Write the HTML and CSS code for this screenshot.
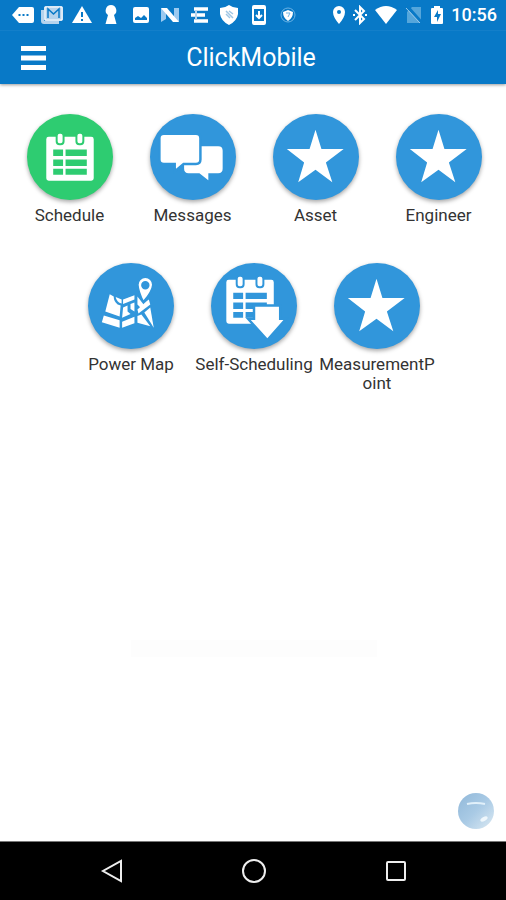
FILE: index.html
```html
<!DOCTYPE html>
<html lang="en">
<head>
<meta charset="utf-8">
<meta name="viewport" content="width=device-width, initial-scale=1">
<title>ClickMobile</title>
<link rel="stylesheet" href="styles.css">
</head>
<body>
<svg class="defs" aria-hidden="true">
  <defs>
    <path id="star" fill="#fff" d="M43 16 49 35.500H71.500L53.500 49 60 69 43 56.500 25.500 69 31.500 49 14 35.500H37Z"/>
    <g id="calendar">
      <path fill="#fff" fill-rule="evenodd" d="M22 23H65Q67.500 23 67.500 25.500V65Q67.500 67.500 65 67.500H22Q19.500 67.500 19.500 65V25.500Q19.500 23 22 23ZM26.500 36V42.500H36.500V36ZM39 36V42.500H60.500V36ZM26.500 46V52.500H36.500V46ZM39 46V52.500H60.500V46ZM26.500 55.500V61.500H36.500V55.500ZM39 55.500V61.500H60.500V55.500Z"/>
      <g fill="#fff" stroke="currentColor" stroke-width="2">
        <rect x="30" y="19" width="7" height="11.500" rx="3"/>
        <rect x="50" y="19" width="7" height="11.500" rx="3"/>
      </g>
    </g>
  </defs>
</svg>
<header class="top">
  <div class="status">
    <div class="notices">
      <svg viewBox="0 0 24 20"><path fill="#fff" d="M8 2H21Q23 2 23 4V16Q23 18 21 18H8L1 10Z"/><path stroke="#0879c7" stroke-width="2" stroke-dasharray="2 2" d="M7.500 10h10"/></svg>
      <svg viewBox="0 0 24 20"><path fill="#b5d3ed" d="M1 5H4V16H19V19H4Q1 19 1 16Z"/><rect x="4" y="1" width="19" height="15" rx="2" fill="#b5d3ed"/><path fill="none" stroke="#fff" stroke-width="1" d="M5 2H22V15H5Z"/><path fill="none" stroke="#0879c7" stroke-width="1.500" d="M8 13V4L13.500 9 19 4V13"/></svg>
      <svg viewBox="0 0 24 20"><path fill="#fff" d="M12 1 22 18H2Z"/><path stroke="#0879c7" stroke-width="2" d="M12 7v5m0 2v2"/></svg>
      <svg viewBox="0 0 24 20"><path fill="#fff" d="M12 0A5.500 5.500 0 0 1 15 10L17.500 19H6.500L9 10A5.500 5.500 0 0 1 12 0Z"/></svg>
      <svg viewBox="0 0 24 20"><rect x="4" y="2" width="16" height="16" rx="2" fill="#fff"/><path fill="#0879c7" d="M6 15V13L9 11 12 13 15 10 18 13V15Z"/></svg>
      <svg viewBox="0 0 24 20"><path fill="#9ccaf0" d="M3 3V17L8 14V6ZM16 3H21V17L16 14Z"/><path fill="#fff" d="M3 3H9L21 17H15Z"/></svg>
      <svg viewBox="0 0 24 20"><path stroke="#fff" stroke-width="3.500" d="M6 4H20M3 10H17M6 16H20"/><path stroke="#b5d3ed" stroke-width="2" d="M8 5V15"/></svg>
      <svg viewBox="0 0 24 20"><path fill="#fff" d="M3 3Q8 3 12 0 16 3 21 3V9Q20 16 12 20 4 16 3 9Z"/><path fill="none" stroke="#9fc6e4" stroke-width="1.500" d="M9 6l7 7M9 9l4 4M12 6l4 3"/></svg>
      <svg viewBox="0 0 24 20"><rect x="6" y="1" width="12" height="18" rx="1" fill="none" stroke="#fff" stroke-width="2"/><path stroke="#fff" stroke-width="2" d="M7 3H17M7 17H17"/><path fill="none" stroke="#fff" stroke-width="2" d="M12 6V13M9 10l3 3 3-3"/></svg>
      <svg viewBox="0 0 24 20"><circle cx="12" cy="10" r="7" fill="none" stroke="#68b2e5"/><path fill="#fff" d="M12 5 17 7Q17 13 12 16 7 13 7 7Z"/><path fill="none" stroke="#78b8e5" d="M10 8h4l-2 4"/></svg>
    </div>
    <div class="system">
      <svg class="pin" viewBox="0 0 14 20"><path fill="#fff" fill-rule="evenodd" d="M7 1A6 6 0 0 1 13 7Q13 12 7 19 1 12 1 7A6 6 0 0 1 7 1ZM7 5A2 2 0 1 0 7 9 2 2 0 1 0 7 5Z"/></svg>
      <svg class="bluetooth" viewBox="0 0 14 20"><path fill="none" stroke="#fff" stroke-width="2" d="M2 5 11 14 7 18V2L11 6 2 15"/><path stroke="#fff" stroke-width="2" d="M0 10h2m10 0h2"/></svg>
      <svg class="wifi" viewBox="0 0 24 20"><path fill="#fff" d="M1 5Q12-3 23 5L12 19Z"/></svg>
      <svg class="sim" viewBox="0 0 18 20"><path fill="#55a6db" d="M7 2H16V18H2V7Z"/><path stroke="#0879c7" stroke-width="3" d="M2 1 17 18"/><path stroke="#9dcaea" d="M1 3 15 18"/></svg>
      <svg class="battery" viewBox="0 0 14 20"><path fill="#fff" d="M4 3V1H10V3H12Q13 3 13 4V18Q13 19 12 19H2Q1 19 1 18V4Q1 3 2 3Z"/><path fill="#0879c7" d="M8 5 4 12H7V17L11 9H8Z"/></svg>
      <time class="clock">10:56</time>
    </div>
  </div>
  <div class="appbar">
    <button class="menu" aria-label="Menu"><svg viewBox="0 0 25 24"><path stroke="#fff" stroke-width="5" d="M0 2.500H25M0 12H25M0 21.500H25"/></svg></button>
    <h1>ClickMobile</h1>
  </div>
</header>
<main>
  <nav class="apps" aria-label="Applications">
    <a class="app" href="#schedule"><span class="disc green"><svg viewBox="0 0 87 87"><use href="#calendar"/></svg></span><span>Schedule</span></a>
    <a class="app" href="#messages"><span class="disc"><svg viewBox="0 0 87 87"><path fill="#fff" d="M38 32.500H69Q73.500 32.500 73.500 37V55.500Q73.500 60 69 60H59V67L50 60H39Q34.500 60 34.500 55.500V37Z"/><path fill="#fff" stroke="currentColor" stroke-width="2.500" d="M14 20H46.500Q51 20 51 24.500V46Q51 50.500 46.500 50.500H34L25 58V50.500H14Q9.500 50.500 9.500 46V24.500Q9.500 20 14 20Z"/></svg></span><span>Messages</span></a>
    <a class="app" href="#asset"><span class="disc"><svg viewBox="0 0 87 87"><use href="#star"/></svg></span><span>Asset</span></a>
    <a class="app" href="#engineer"><span class="disc"><svg viewBox="0 0 87 87"><use href="#star"/></svg></span><span>Engineer</span></a>
    <a class="app" href="#power-map"><span class="disc"><svg viewBox="0 0 87 87"><g fill="#fff"><path d="M22 31.500 26 34Q26 39 30 42L33 43 32 54 17.500 49Z"/><path d="M28 34.500 34 37V41Q29 40 28 34.500Z"/><path d="M16 53 32 58V65.500L14 60Z"/><path d="M35.500 37 47 32.500V37L35.500 41.500Z"/><path d="M35.500 45 40 43V49L43 51.500 34.500 55.500Z"/><path d="M43 41.500 47 40V49L43 46.500Z"/><path d="M34.500 59.500 47 54.500V61L34.500 65.500Z"/><path d="M50 34 57 43 54 46 50 42Z"/><path d="M59 39 61.500 37 63 42 51 51 50 47Z"/><path d="M63 45 66.500 65.500 57 50Z"/><path d="M50 53.500 54 52 63 64 50 60.500Z"/></g><path fill="#fff" fill-rule="evenodd" stroke="currentColor" stroke-width="1.500" d="M58 14.500A7.500 7.500 0 0 1 65.500 22Q65 29 56 39 51 29 50.500 22A7.500 7.500 0 0 1 58 14.500ZM58 19A3.500 3.500 0 1 0 58 26 3.500 3.500 0 1 0 58 19Z"/></svg></span><span>Power Map</span></a>
    <a class="app" href="#self-scheduling"><span class="disc"><svg viewBox="0 0 87 87"><use href="#calendar" x="-4" y="-6"/><path fill="#fff" stroke="currentColor" stroke-width="2.500" d="M43.500 43H70V56.500H76L57 78 37.500 56.500H43.500Z"/></svg></span><span>Self-Scheduling</span></a>
    <a class="app" href="#measurement-point"><span class="disc"><svg viewBox="0 0 87 87"><use href="#star"/></svg></span><span>MeasurementPoint</span></a>
  </nav>
  <div class="ghost"></div>
  <button class="assist" aria-label="Assistant"><svg viewBox="0 0 36 36"><defs><linearGradient id="glass" x1="0" y1="0" x2="1" y2="1"><stop stop-color="#91b8d9"/><stop offset=".5" stop-color="#a9cae5"/><stop offset="1" stop-color="#dceaf3"/></linearGradient></defs><circle cx="18" cy="18" r="18" fill="url(#glass)"/><path fill="none" stroke="#e1f0fa" stroke-width="2" d="M9 11Q18 9 27 11"/><ellipse cx="26" cy="26" rx="4" ry="2" transform="rotate(-30 26 26)" fill="#eff7fc"/></svg></button>
</main>
<footer class="system-nav">
  <button aria-label="Back"><svg viewBox="0 0 26 26"><path d="M22 3V23L4 13Z"/></svg></button>
  <button aria-label="Home"><svg viewBox="0 0 26 26"><circle cx="13" cy="13" r="11"/></svg></button>
  <button aria-label="Recent apps"><svg viewBox="0 0 26 26"><rect x="4" y="4" width="18" height="18" rx="1"/></svg></button>
</footer>
</body>
</html>
```
FILE: styles.css
```css
* { box-sizing: border-box; }
body {
  margin: 0;
  min-height: 100vh;
  display: flex;
  flex-direction: column;
  background: #fff;
  color: #333;
  font-family: Roboto, "Liberation Sans", sans-serif;
}
svg { display: block; }
button { padding: 0; border: 0; background: none; }
.defs { position: absolute; width: 0; height: 0; }

.top {
  background: #0879c7;
  color: #fff;
  box-shadow: 0 1px 3px rgba(0, 0, 0, .4);
}
.status {
  display: flex;
  justify-content: space-between;
  height: 31px;
  padding: 0 9px 0 8px;
  border-bottom: 1px solid #137fca;
}
.notices {
  display: grid;
  grid-template-columns: repeat(10, 1fr);
  flex: 0 1 295px;
  align-items: center;
  justify-items: center;
}
.notices svg { width: 24px; height: 20px; }
.system { display: flex; align-items: center; gap: 7px; }
.system svg { height: 20px; }
.pin, .bluetooth, .battery { width: 14px; }
.wifi { width: 24px; }
.sim { width: 18px; }
.clock { font-size: 18px; font-weight: 500; line-height: 30px; }

.appbar {
  display: grid;
  grid-template-columns: 25px 1fr 25px;
  align-items: center;
  height: 53px;
  padding: 0 25px 0 21px;
}
.menu svg { width: 25px; height: 24px; }
h1 {
  margin: 0;
  font-size: 25px;
  font-weight: 400;
  line-height: 32px;
  text-align: center;
}

main {
  flex: 1;
  display: flex;
  flex-direction: column;
  padding: 30px 6px 12px 8px;
}
.apps {
  display: flex;
  flex-wrap: wrap;
  justify-content: center;
  row-gap: 38px;
}
.app {
  display: flex;
  flex-direction: column;
  align-items: center;
  gap: 6px;
  width: 25%;
  padding: 0 2px;
  color: inherit;
  font-size: 17px;
  line-height: 19px;
  text-align: center;
  text-decoration: none;
}
.app > span:last-child { max-width: 100%; overflow-wrap: anywhere; }
.disc {
  width: 86px;
  height: 86px;
  border-radius: 50%;
  background: #3196db;
  color: #3196db;
  box-shadow: 0 2px 4px rgba(0, 0, 0, .35);
}
.green { background: #2ecc71; color: #2ecc71; }
.ghost {
  width: 50%;
  height: 17px;
  margin: auto auto 0;
  background: #fdfdfd;
}
.assist { align-self: flex-end; margin: 136px 6px 0; }
.assist svg { width: 36px; height: 36px; }

.system-nav {
  display: flex;
  justify-content: center;
  gap: 116px;
  height: 59px;
  padding-left: 1px;
  border-top: 1px solid #777;
  background: #000;
}
.system-nav svg {
  width: 26px;
  height: 26px;
  fill: none;
  stroke: #eee;
  stroke-width: 2;
}
```
